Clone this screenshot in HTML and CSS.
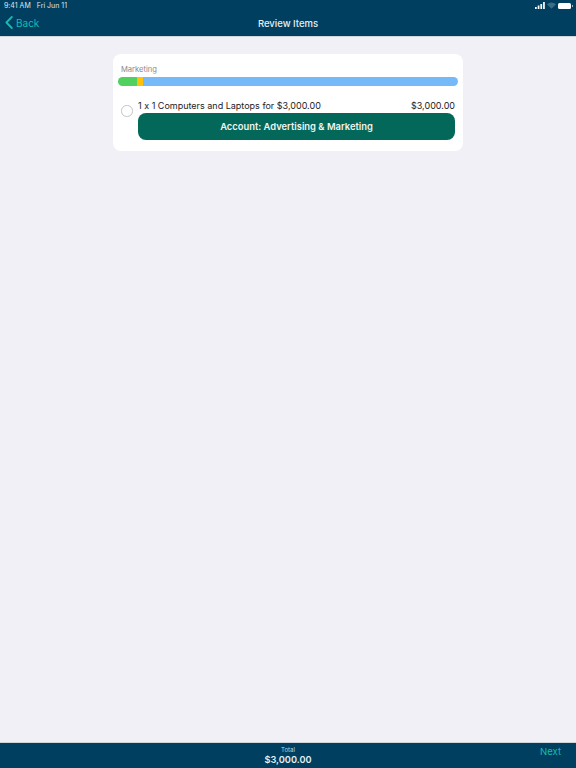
FILE: index.html
```
<!DOCTYPE html>
<html lang="en">
<head>
<meta charset="utf-8">
<title>Review Items</title>
<link rel="stylesheet" href="styles.css">
</head>
<body>
<div class="app">
  <header class="top">
    <div class="status">
      <span class="status-text">9:41 AM</span>
      <span class="status-text">Fri Jun 11</span>
      <span class="status-icons">
        <svg class="signal" width="10" height="7" viewBox="0 0 10 7"><rect x="0" y="5" width="1.7" height="2" fill="#fff"/><rect x="2.7" y="3.5" width="1.7" height="3.5" fill="#fff"/><rect x="5.4" y="2" width="1.7" height="5" fill="#fff"/><rect x="8.1" y="0" width="1.7" height="7" fill="#fff"/></svg>
        <svg class="wifi" width="9" height="7" viewBox="0 0 10 7"><path d="M5 7 L0 2 Q5 -1.6 10 2 Z" fill="#3d6c88"/></svg>
        <span class="battery"></span>
      </span>
    </div>
    <nav class="nav">
      <a class="back">
        <svg width="8" height="13" viewBox="0 0 8 13"><path d="M6.8 1 L1.4 6.5 L6.8 12" fill="none" stroke="#12bdb2" stroke-width="1.8" stroke-linecap="round" stroke-linejoin="round"/></svg>
        <span>Back</span>
      </a>
      <h1 class="title">Review Items</h1>
    </nav>
  </header>
  <main class="content">
    <section class="card">
      <div class="cat">Marketing</div>
      <div class="bar">
        <span class="seg green"></span>
        <span class="seg yellow"></span>
        <span class="seg blue"></span>
      </div>
      <div class="item">
        <span class="radio"></span>
        <div class="item-body">
          <div class="item-line">
            <span>1 x 1 Computers and Laptops for $3,000.00</span>
            <span>$3,000.00</span>
          </div>
          <button class="account">Account: Advertising &amp; Marketing</button>
        </div>
      </div>
    </section>
  </main>
  <footer class="bottom">
    <div class="total">
      <div class="total-label">Total</div>
      <div class="total-value">$3,000.00</div>
    </div>
    <a class="next">Next</a>
  </footer>
</div>
</body>
</html>
```
FILE: styles.css
```
* { box-sizing: border-box; }
html, body { margin: 0; height: 100%; }
body { font-family: Inter, "Liberation Sans", sans-serif; font-feature-settings: "calt" 0; background: #f1f0f6; color: #111; }
.app { height: 768px; display: flex; flex-direction: column; }
.top { height: 37px; background: #003f5f; border-bottom: 1px solid #cfd6db; flex: none; }
.status { height: 11px; display: flex; align-items: center; gap: 6px; padding: 0 4px; font-size: 7px; color: #dfe8ed; }
.status-icons { margin-left: auto; display: flex; align-items: center; gap: 2px; }
.battery { width: 13px; height: 6px; background: #fff; border-radius: 1.5px; display: block; margin-right: 1px; position: relative; }
.battery::after { content: ""; position: absolute; right: -1.5px; top: 2px; width: 1px; height: 2px; background: #9fb6c3; }
.nav { height: 25px; display: flex; align-items: center; justify-content: center; position: relative; }
.back { position: absolute; left: 5px; top: 5px; display: flex; align-items: center; gap: 3px; font-size: 10px; color: #12bdb2; }
.title { margin: 0; font-size: 9.5px; font-weight: 500; color: #e8f0f4; }
.content { flex: 1; padding: 17px 113px 0; }
.card { width: 350px; height: 97px; background: #fff; border-radius: 8px; padding: 11px 5px 0; }
.cat { font-size: 7.6px; line-height: 10px; color: #8a8a8e; padding-left: 3px; }
.bar { display: flex; height: 9px; margin-top: 2px; border-radius: 5px; overflow: hidden; }
.seg { display: block; height: 100%; }
.green { width: 19px; background: #4fd05f; }
.yellow { width: 6px; background: #fdc20a; }
.blue { flex: 1; background: #76b9f8; }
.item { display: flex; align-items: flex-start; margin-top: 13px; padding: 0 3px; }
.radio { width: 11.5px; height: 11.5px; border: 1px solid #c4c4c8; border-radius: 50%; flex: none; margin: 6px 5.5px 0 0; }
.item-body { flex: 1; }
.item-line { display: flex; justify-content: space-between; font-size: 9px; line-height: 13px; padding-bottom: 1px; color: #1c1c1e; }
.account { display: block; width: 100%; height: 27px; border: 0; border-radius: 8px; background: #036759; color: #eef5f3; font: 600 9.4px Inter, "Liberation Sans", sans-serif; font-feature-settings: "calt" 0; }
.bottom { height: 26px; background: #003f5f; border-top: 1px solid #cfd6db; flex: none; position: relative; display: flex; justify-content: center; }
.total { text-align: center; color: #e8f0f4; padding-top: 3px; }
.total-label { font-size: 6px; line-height: 8px; color: #c5d4dc; }
.total-value { font-size: 9.2px; line-height: 12px; font-weight: 600; }
.next { position: absolute; right: 15px; top: 3px; font-size: 9.5px; color: #12bdb2; }
```
